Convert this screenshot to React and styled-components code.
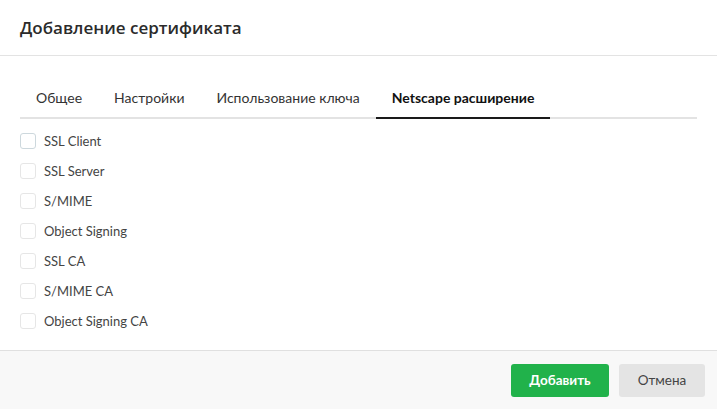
import styled, { createGlobalStyle } from "styled-components";

const GlobalStyle = createGlobalStyle`
  body {
    margin: 0;
    background: #fff;
    font-family: "Lato", "Liberation Sans", sans-serif;
  }
`;

const tabs = ["Общее", "Настройки", "Использование ключа", "Netscape расширение"];
const options = [
  "SSL Client",
  "SSL Server",
  "S/MIME",
  "Object Signing",
  "SSL CA",
  "S/MIME CA",
  "Object Signing CA",
];

const App = () => {
  return (
    <Dialog>
      <GlobalStyle />
      <Header>
        <Title>Добавление сертификата</Title>
      </Header>
      <Body>
        <Tabs>
          {tabs.map((t, i) => (
            <Tab key={t} active={i === 3}>
              {t}
            </Tab>
          ))}
        </Tabs>
        <List>
          {options.map((o, i) => (
            <Row key={o}>
              <Box focused={i === 0} />
              <span>{o}</span>
            </Row>
          ))}
        </List>
      </Body>
      <Footer>
        <Button primary>Добавить</Button>
        <Button>Отмена</Button>
      </Footer>
    </Dialog>
  );
};

export default App;

const Dialog = styled.div`
  width: 717px;
  height: 409px;
  display: flex;
  flex-direction: column;
  background: #fff;
`;

const Header = styled.div`
  height: 56px;
  box-sizing: border-box;
  padding: 0 20px;
  display: flex;
  align-items: center;
  border-bottom: 1px solid #e3e3e3;
`;

const Title = styled.div`
  font-family: "Open Sans", "Noto Sans", sans-serif;
  font-size: 17px;
  font-weight: 600;
  color: #2b2b2b;
  margin-top: -1px;
`;

const Body = styled.div`
  flex: 1;
  padding: 21px 20px 0;
`;

const Tabs = styled.div`
  display: flex;
  width: 677px;
  border-bottom: 2px solid #e3e3e3;
`;

const Tab = styled.div`
  font-size: 14px;
  color: ${(p) => (p.active ? "#111" : "#333")};
  font-weight: ${(p) => (p.active ? 700 : 400)};
  padding: 12px 16px 11px;
  margin-bottom: -2px;
  border-bottom: 2px solid ${(p) => (p.active ? "#1a1a1a" : "transparent")};
`;

const List = styled.div`
  display: flex;
  flex-direction: column;
  padding-top: 7px;
`;

const Row = styled.div`
  display: flex;
  align-items: center;
  height: 30px;
  font-size: 13px;
  color: #444;
`;

const Box = styled.div`
  width: 16px;
  height: 16px;
  box-sizing: border-box;
  border: 1px solid ${(p) => (p.focused ? "#cdd8dd" : "#e6e6e6")};
  border-radius: 3px;
  margin-right: 8px;
  background: #fff;
`;

const Footer = styled.div`
  height: 59px;
  box-sizing: border-box;
  border-top: 1px solid #e0e0e0;
  background: #f8f8f8;
  display: flex;
  align-items: center;
  justify-content: flex-end;
  gap: 10px;
  padding: 0 12px 0 0;
`;

const Button = styled.button`
  height: 33px;
  padding: 0;
  width: ${(p) => (p.primary ? "98px" : "86px")};
  border: none;
  border-radius: 3px;
  font-family: "Lato", "Liberation Sans", sans-serif;
  font-size: 13.5px;
  font-weight: ${(p) => (p.primary ? 700 : 400)};
  color: ${(p) => (p.primary ? "#fff" : "#444")};
  background: ${(p) => (p.primary ? "#21b24b" : "#e4e4e4")};
`;
